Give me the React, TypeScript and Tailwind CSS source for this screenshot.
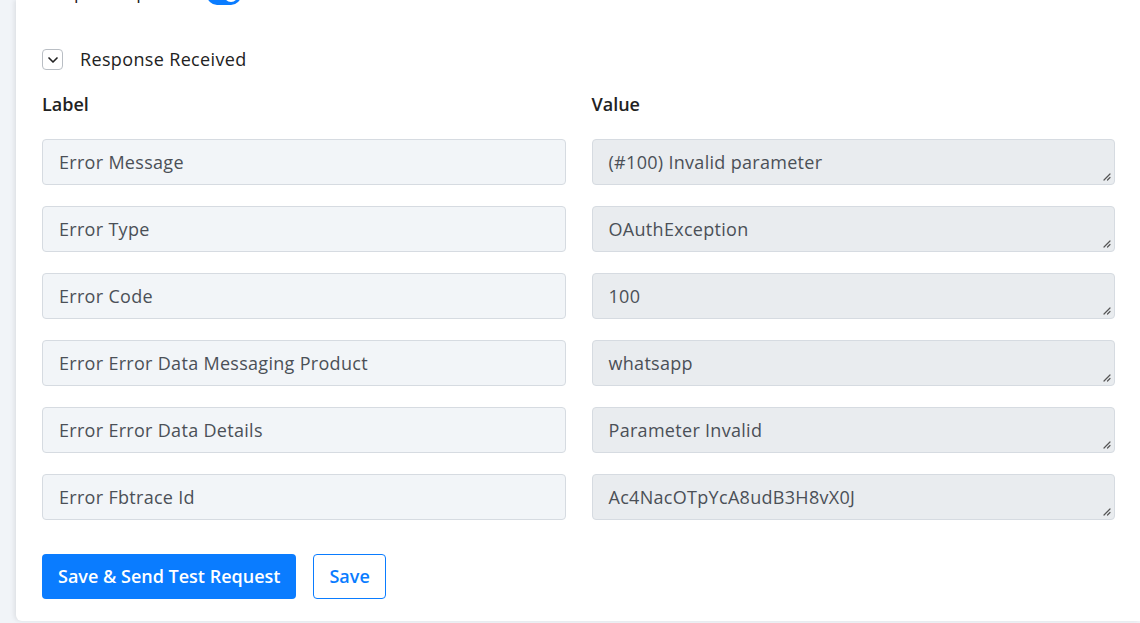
import { ChevronDown } from "lucide-react"

type Field = { label: string; value: string }

const fields: Field[] = [
  { label: "Error Message", value: "(#100) Invalid parameter" },
  { label: "Error Type", value: "OAuthException" },
  { label: "Error Code", value: "100" },
  { label: "Error Error Data Messaging Product", value: "whatsapp" },
  { label: "Error Error Data Details", value: "Parameter Invalid" },
  { label: "Error Fbtrace Id", value: "Ac4NacOTpYcA8udB3H8vX0J" },
]

function ResizeGrip() {
  return (
    <svg className="absolute right-[3px] bottom-[3px]" width="9" height="9" viewBox="0 0 9 9">
      <path d="M8 2 L2 8 M8 5.5 L5.5 8" stroke="#555" strokeWidth="1.2" strokeLinecap="round" />
    </svg>
  )
}

export default function App() {
  return (
    <div className="h-[623px] w-[1140px] overflow-hidden bg-[#f1f4f8] pl-4 font-['Open_Sans',sans-serif]">
      <div className="flow-root h-[621px] rounded-bl-md bg-white pl-[26px] pr-[25px] shadow-[-2px_0_4px_rgba(0,0,0,0.08)]">
        {/* toggle row, scrolled partly out of view */}
        <div className="-mt-[15px] flex h-5 items-start gap-[18px]">
          <span className="-translate-y-[5px] text-[18px] leading-[24px] tracking-[0.3px] text-[#222]">Simple Response</span>
          <span className="relative h-5 w-[34px] rounded-full bg-[#0a7cff]">
            <span className="absolute right-[3px] top-[3px] h-[14px] w-[14px] rounded-full bg-white" />
          </span>
        </div>

        <div className="mt-[41px] flex items-center gap-[17px]">
          <span className="flex h-[21px] w-[21px] items-center justify-center rounded-[4px] border border-[#b9bec4] bg-white">
            <ChevronDown className="h-4 w-4 text-[#222]" strokeWidth={2.5} />
          </span>
          <span className="text-[18px] tracking-[0.35px] text-[#222]">Response Received</span>
        </div>

        <div className="mt-[18px] grid grid-cols-2 gap-x-[26px]">
          <div className="text-[18px] font-semibold text-[#222]">Label</div>
          <div className="text-[18px] font-semibold text-[#222]">Value</div>
        </div>

        <div className="mt-[21px] flex flex-col gap-[21px]">
          {fields.map((f) => (
            <div key={f.label} className="grid grid-cols-2 gap-x-[26px]">
              <div className="flex h-[46px] items-center rounded-[4px] border border-[#d6dbe1] bg-[#f2f5f8] px-4 text-[18px] tracking-[0.3px] text-[#4b5057]">
                {f.label}
              </div>
              <div className="relative flex h-[46px] items-center rounded-[4px] border border-[#d6dbe1] bg-[#e9ecef] px-4 text-[18px] tracking-[0.3px] text-[#4b5057]">
                {f.value}
                <ResizeGrip />
              </div>
            </div>
          ))}
        </div>

        <div className="mt-[34px] flex gap-[17px]">
          <button className="h-[45px] rounded-[4px] bg-[#0a7cff] px-[16px] text-[18px] font-semibold text-white">
            Save &amp; Send Test Request
          </button>
          <button className="h-[45px] rounded-[4px] border border-[#0a7cff] bg-white px-[15px] text-[18px] font-semibold text-[#0a7cff]">
            Save
          </button>
        </div>
      </div>
    </div>
  )
}
